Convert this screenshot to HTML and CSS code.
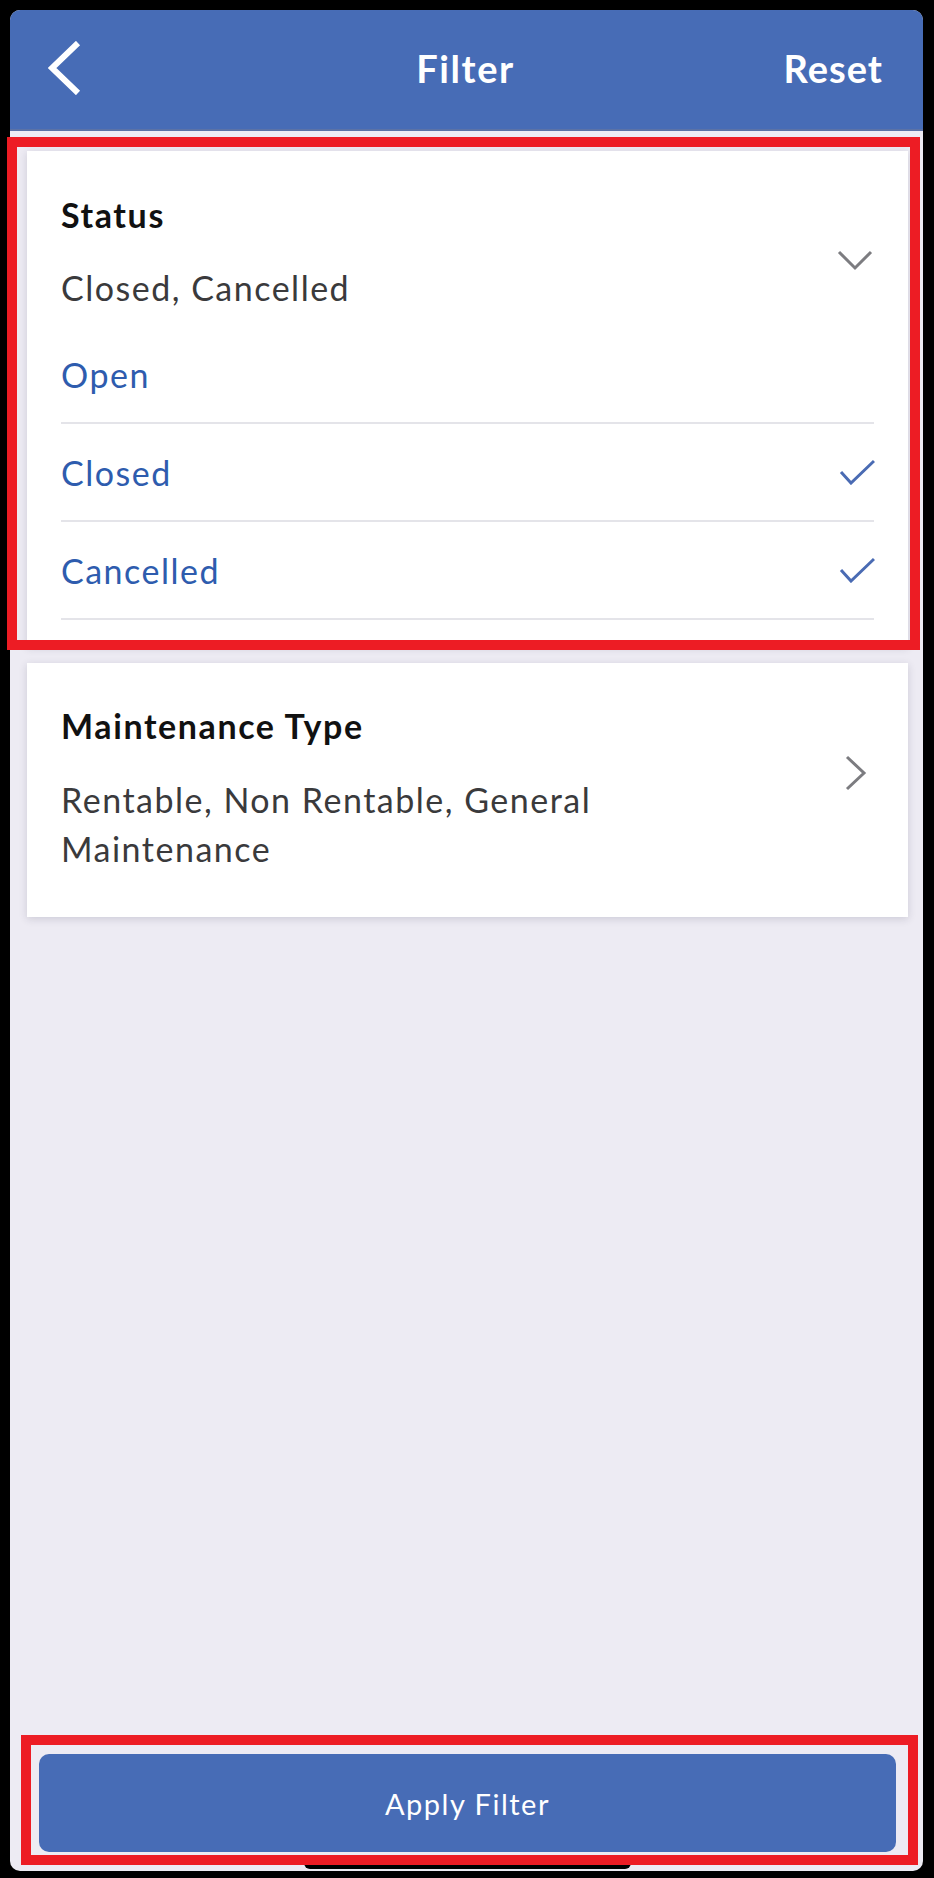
FILE: index.html
```html
<!DOCTYPE html>
<html lang="en">
<head>
<meta charset="utf-8">
<title>Filter</title>
<link rel="stylesheet" href="styles.css">
</head>
<body>
<div class="frame">
  <div class="screen">
    <header class="nav">
      <div class="nav-left">
        <svg class="back" width="34" height="54" viewBox="0 0 34 54" aria-hidden="true">
          <polyline points="30,2 4,27 30,52" fill="none" stroke="#fff" stroke-width="6"/>
        </svg>
      </div>
      <div class="nav-title">Filter</div>
      <div class="nav-right">Reset</div>
    </header>

    <main class="content">
      <section class="card card-status">
        <div class="card-head">
          <div class="card-text">
            <div class="card-title">Status</div>
            <div class="card-summary">Closed, Cancelled</div>
          </div>
          <svg class="chev-down" width="36" height="22" viewBox="0 0 36 22" aria-hidden="true">
            <polyline points="2,3 18,19 34,3" fill="none" stroke="#7c7c80" stroke-width="3"/>
          </svg>
        </div>
        <ul class="options">
          <li class="option"><span>Open</span></li>
          <li class="option"><span>Closed</span>
            <svg class="check" width="36" height="26" viewBox="0 0 36 26" aria-hidden="true">
              <polyline points="2,13 12,24 35,2" fill="none" stroke="#4a6bb3" stroke-width="3"/>
            </svg>
          </li>
          <li class="option"><span>Cancelled</span>
            <svg class="check" width="36" height="26" viewBox="0 0 36 26" aria-hidden="true">
              <polyline points="2,13 12,24 35,2" fill="none" stroke="#4a6bb3" stroke-width="3"/>
            </svg>
          </li>
        </ul>
      </section>

      <section class="card card-type">
        <div class="card-text">
          <div class="card-title">Maintenance Type</div>
          <div class="card-summary wrap">Rentable, Non Rentable, General Maintenance</div>
        </div>
        <svg class="chev-right" width="24" height="36" viewBox="0 0 24 36" aria-hidden="true">
          <polyline points="3,2 20,18 3,34" fill="none" stroke="#7c7c80" stroke-width="3"/>
        </svg>
      </section>
    </main>

    <footer class="footer">
      <button class="apply" type="button">Apply Filter</button>
      <div class="home-indicator"></div>
    </footer>
  </div>

  <div class="mark mark-status"></div>
  <div class="mark mark-apply"></div>
</div>
</body>
</html>
```

FILE: styles.css
```css
* { box-sizing: border-box; }

html, body {
  margin: 0;
  padding: 0;
  background: #000;
}

body {
  font-family: "Lato", "Open Sans", sans-serif;
  letter-spacing: 1.5px;
}

.frame {
  position: relative;
  width: 934px;
  height: 1878px;
  background: #000;
  padding: 10px 11px 7px 10px;
}

.screen {
  width: 913px;
  height: 1861px;
  background: #edebf3;
  border-radius: 10px;
  overflow: hidden;
  display: flex;
  flex-direction: column;
}

/* Header */
.nav {
  height: 121px;
  background: #476cb6;
  border-bottom: 2px solid #5b72a6;
  display: grid;
  grid-template-columns: 1fr auto 1fr;
  align-items: center;
  padding: 0 40px 4px 38px;
  color: #fff;
  flex: none;
}

.nav-left { display: flex; align-items: center; }
.back { display: block; }

.nav-title {
  font-weight: 700;
  font-size: 38px;
  letter-spacing: 1.6px;
}

.nav-right {
  justify-self: end;
  font-weight: 700;
  font-size: 38px;
  letter-spacing: 1px;
}

/* Content */
.content {
  flex: 1;
  padding: 20px 15px 0 17px;
  display: flex;
  flex-direction: column;
  gap: 17px;
}

.card {
  background: #fff;
  box-shadow: 0 2px 8px rgba(40, 40, 70, 0.16);
}

.card-status {
  height: 495px;
  padding: 0 34px;
}

.card-head {
  display: flex;
  justify-content: space-between;
  align-items: flex-start;
  height: 175px;
  padding-top: 44px;
}

.card-title {
  font-weight: 700;
  font-size: 34px;
  line-height: 40px;
  color: #111;
  letter-spacing: 1.6px;
}

.card-summary {
  font-size: 34px;
  line-height: 49px;
  color: #3a3a3c;
  margin-top: 28px;
}

.chev-down {
  margin-top: 54px;
  margin-right: 1px;
}

.options {
  list-style: none;
  margin: 0;
  padding: 0;
}

.option {
  height: 98px;
  border-bottom: 2px solid #e4e4e9;
  display: flex;
  align-items: center;
  justify-content: space-between;
  font-size: 34px;
  color: #2e5cae;
}

.check { margin-right: -1px; }

.card-type {
  height: 254px;
  padding: 43px 40px 0 34px;
  display: flex;
  justify-content: space-between;
  align-items: flex-start;
}

.card-type .card-summary { margin-top: 29px; }

.wrap { width: 600px; }

.chev-right { margin-top: 49px; }

/* Footer */
.footer {
  flex: none;
  padding: 0 27px 2px 29px;
  display: flex;
  flex-direction: column;
  align-items: center;
}

.apply {
  width: 100%;
  height: 98px;
  border: none;
  border-radius: 10px;
  background: #476cb6;
  color: #fff;
  font-family: "Lato", "Open Sans", sans-serif;
  font-size: 29px;
  font-weight: 400;
  letter-spacing: 1.5px;
}

.home-indicator {
  width: 327px;
  height: 12px;
  margin-top: 5px;
  border-radius: 6px;
  background: #000;
}

/* Annotation overlays */
.mark {
  position: absolute;
  border: 10px solid #ed1c24;
  pointer-events: none;
}

.mark-status {
  left: 7px;
  top: 137px;
  width: 913px;
  height: 513px;
}

.mark-apply {
  left: 21px;
  top: 1735px;
  width: 897px;
  height: 130px;
}
```
